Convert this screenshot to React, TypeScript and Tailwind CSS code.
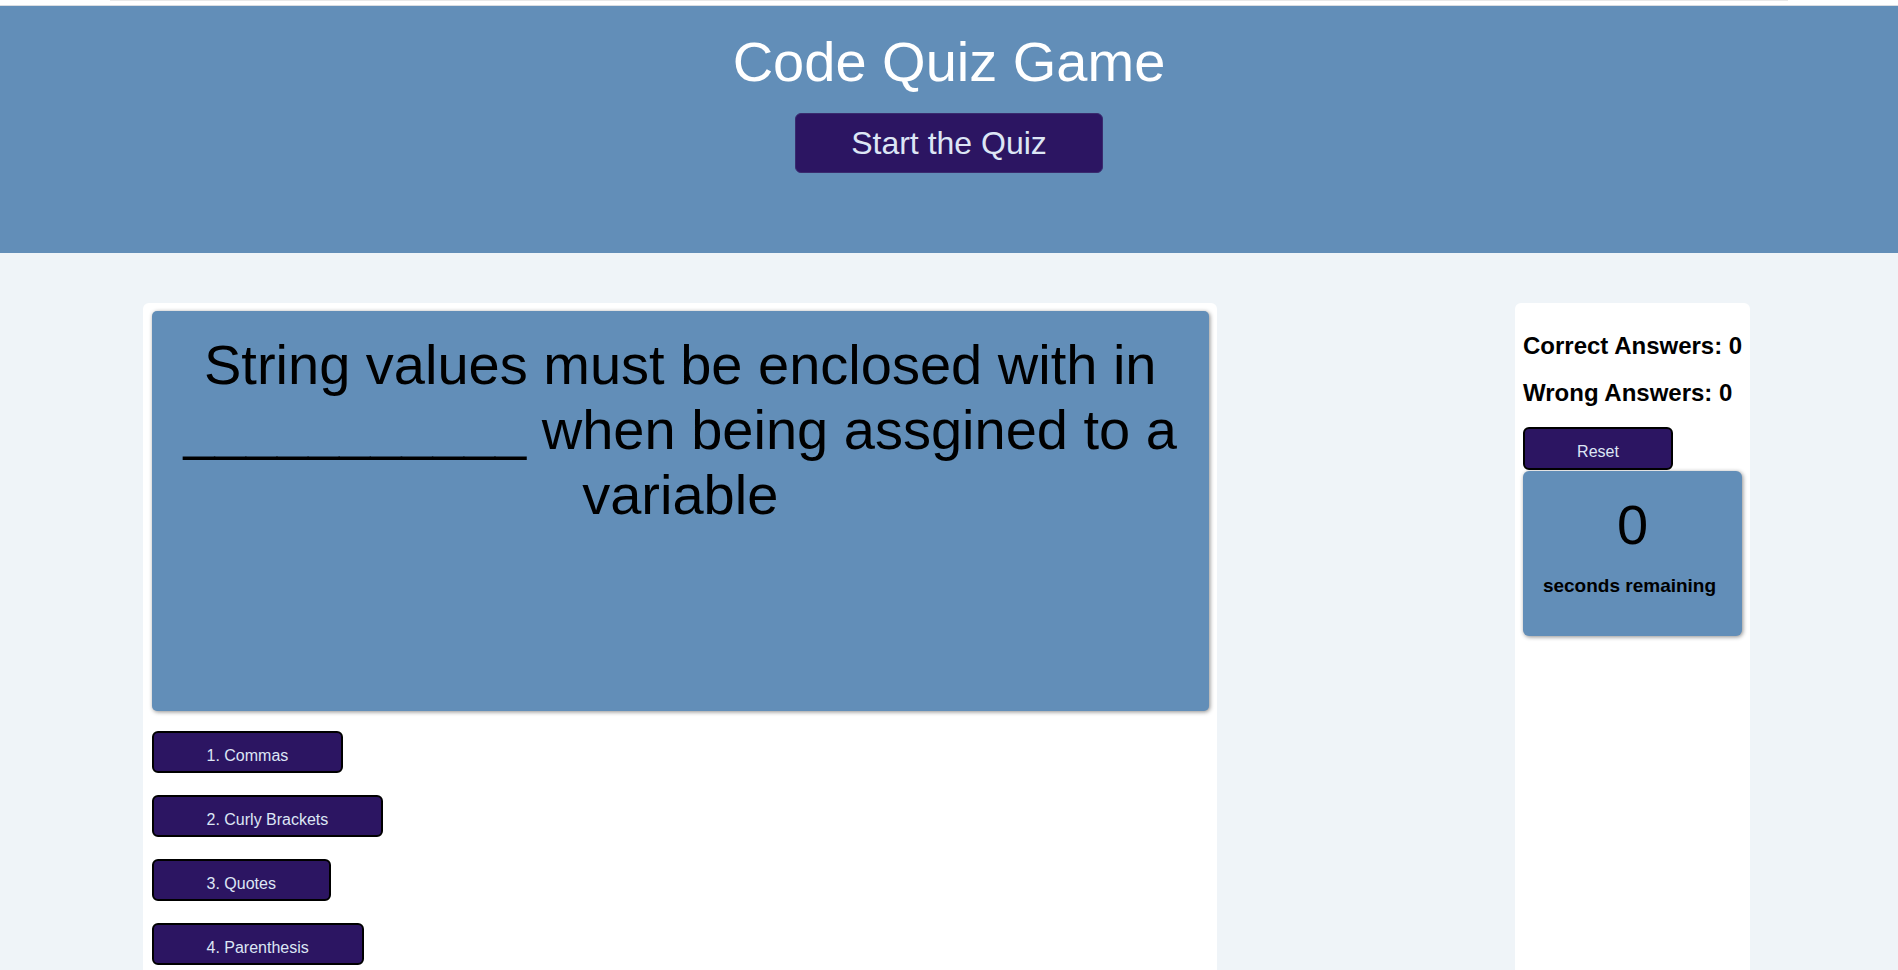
import React from "react";

const answers = ["1. Commas", "2. Curly Brackets", "3. Quotes", "4. Parenthesis"];

const btn =
  "border-2 border-black rounded-[6px] bg-[#2c1562] text-[#dde6f5] text-[16px] leading-[18px] px-[53px] pt-[14px] pb-[6.5px] whitespace-nowrap";

export default function App() {
  return (
    <div
      className="h-screen overflow-hidden flex flex-col bg-[#eff4f8]"
      style={{ fontFamily: '"Liberation Sans", Arial, sans-serif' }}
    >
      <div className="h-[5px] bg-white shrink-0">
        <div className="mx-[110px] h-px bg-[#e8e8e8]" />
      </div>
      <header className="h-[248px] shrink-0 bg-[#628eb8] border-t border-[#d9dde2] flex flex-col items-center">
        <h1 className="mt-[24px] text-[56px] leading-[64px] text-white">Code Quiz Game</h1>
        <button className="mt-[19px] h-[60px] w-[308px] flex items-center justify-center rounded-[6px] bg-[#2c1562] border border-[#3a2b6e] text-[32px] leading-[37px] text-[#dde6f5]">
          Start the Quiz
        </button>
      </header>
      <main className="flex-1 min-h-0 flex justify-between pl-[143px] pr-[148px] pt-[50px]">
        <section className="w-[1074px] bg-white rounded-t-[6px] pl-[8.5px] pr-[8px] pt-[8px]">
          <div className="h-[400px] bg-[#628eb8] rounded-[5px] shadow-[1px_1px_4px_rgba(0,0,0,0.45)] px-[16px] pt-[21px] text-center text-black text-[56px] leading-[65px]">
            String values must be enclosed with in ___________ when being assgined to a variable
          </div>
          <div className="mt-[19.5px] flex flex-col items-start gap-[21.5px]">
            {answers.map((a) => (
              <button key={a} className={btn}>
                {a}
              </button>
            ))}
          </div>
        </section>
        <aside className="w-[235px] bg-white rounded-t-[6px] p-[8px]">
          <h3 className="mt-[20.5px] text-[24px] leading-[27px] font-bold text-black whitespace-nowrap">
            Correct Answers: 0
          </h3>
          <h3 className="mt-[20.6px] text-[24px] leading-[27px] font-bold text-black whitespace-nowrap">
            Wrong Answers: 0
          </h3>
          <button className={btn + " mt-[21px] w-[150px] !px-0 text-center"}>Reset</button>
          <div className="mt-[1.5px] w-[219px] h-[165px] bg-[#628eb8] rounded-[6px] shadow-[1px_1px_4px_rgba(0,0,0,0.45)] flex flex-col items-center pt-[21.7px]">
            <div className="text-[56px] leading-[64px] text-black">0</div>
            <div className="mt-[18px] pr-[6px] text-[19px] leading-[21px] font-bold text-black">seconds remaining</div>
          </div>
        </aside>
      </main>
    </div>
  );
}
